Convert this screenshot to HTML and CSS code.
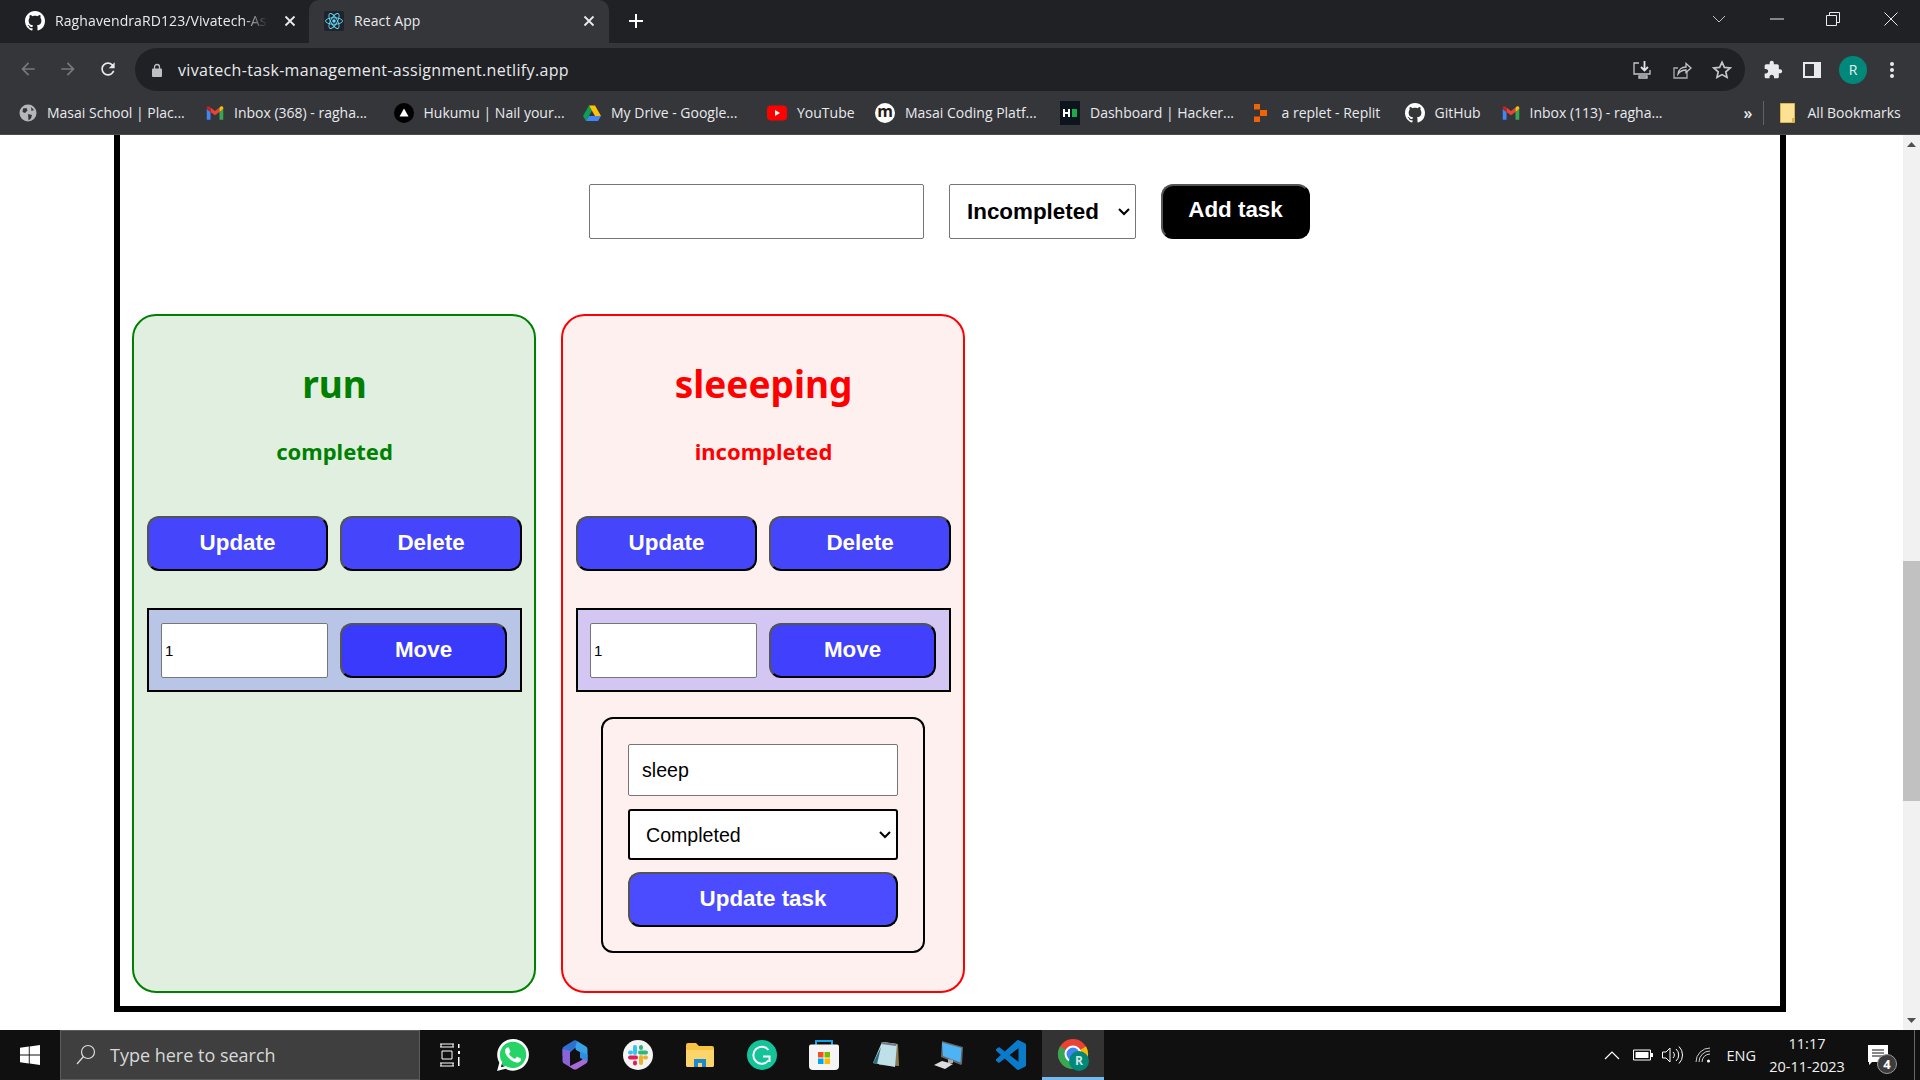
FILE: index.html
```html
<!DOCTYPE html>
<html lang="en">
<head>
<meta charset="utf-8">
<title>React App</title>
<link rel="stylesheet" href="styles.css">
</head>
<body>
<svg class="defs" width="0" height="0">
  <symbol id="gh" viewBox="0 0 16 16"><path fill="#fff" d="M8 0C3.58 0 0 3.58 0 8c0 3.54 2.29 6.53 5.47 7.59.4.07.55-.17.55-.38 0-.19-.01-.82-.01-1.49-2.01.37-2.53-.49-2.69-.94-.09-.23-.48-.94-.82-1.13-.28-.15-.68-.52-.01-.53.63-.01 1.08.58 1.23.82.72 1.21 1.87.87 2.33.66.07-.52.28-.87.51-1.07-1.78-.2-3.64-.89-3.64-3.95 0-.87.31-1.59.82-2.15-.08-.2-.36-1.02.08-2.12 0 0 .67-.21 2.2.82.64-.18 1.32-.27 2-.27.68 0 1.36.09 2 .27 1.53-1.04 2.2-.82 2.2-.82.44 1.1.16 1.92.08 2.12.51.56.82 1.27.82 2.15 0 3.07-1.87 3.75-3.65 3.95.29.25.54.73.54 1.48 0 1.07-.01 1.93-.01 2.2 0 .21.15.46.55.38A8.013 8.013 0 0016 8c0-4.42-3.58-8-8-8z"/></symbol>
  <symbol id="gm" viewBox="0 0 24 24"><path fill="#4285f4" d="M1 21h5V10.5L1 6.5z"/><path fill="#34a853" d="M18 21h5V6.5l-5 4z"/><path fill="#ea4335" d="M6 10.5V4.5l6 4.7 6-4.7v6l-6 4.6z"/><path fill="#fbbc04" d="M18 4.5l1.6-1.2c1.4-1 3.4 0 3.4 1.8v1.4l-5 4z"/><path fill="#c5221f" d="M6 4.5L4.400 3.300C3 2.300 1 3.300 1 5.100v1.400l5 4z"/></symbol>
  <symbol id="cl" viewBox="0 0 16 16"><path stroke="#e8eaed" stroke-width="1.800" fill="none" d="M3.500 3.500l9 9M12.500 3.500l-9 9"/></symbol>
</svg>

<div class="tabstrip">
  <div class="tab tab-idle">
    <svg class="ic16 ic-gh" width="20" height="20"><use href="#gh"/></svg>
    <span class="tab-title tab-fade">RaghavendraRD123/Vivatech-As</span>
    <svg class="tab-x" width="16" height="16"><use href="#cl"/></svg>
  </div>
  <div class="tab tab-active">
    <svg class="react" width="20" height="20" viewBox="0 0 20 20"><rect width="20" height="20" rx="2" fill="#20232a"/><g fill="none" stroke="#61dafb" stroke-width=".9"><ellipse cx="10" cy="10" rx="8.500" ry="3.300"/><ellipse cx="10" cy="10" rx="8.500" ry="3.300" transform="rotate(60 10 10)"/><ellipse cx="10" cy="10" rx="8.500" ry="3.300" transform="rotate(120 10 10)"/></g><circle cx="10" cy="10" r="1.700" fill="#61dafb"/></svg>
    <span class="tab-title">React App</span>
    <svg class="tab-x" width="16" height="16"><use href="#cl"/></svg>
  </div>
  <svg class="newtab" width="16" height="16" viewBox="0 0 16 16"><path d="M8 1v14M1 8h14" stroke="#fff" stroke-width="2"/></svg>
  <div class="winctl">
    <svg class="wc wc-drop" width="14" height="8" viewBox="0 0 14 8"><path d="M1 1l6 6 6-6" fill="none" stroke="#bdc1c6"/></svg>
    <svg class="wc wc-min" width="14" height="2" viewBox="0 0 14 2"><path d="M0 1h14" stroke="#e8eaed"/></svg>
    <svg class="wc wc-max" width="14" height="14" viewBox="0 0 14 14"><path d="M.5 3.500h10v10H.5zM3.500 3.500V.5h10v10h-3" fill="none" stroke="#e8eaed"/></svg>
    <svg class="wc wc-close" width="14" height="14" viewBox="0 0 14 14"><path d="M.5.5l13 13M13.500.5l-13 13" stroke="#e8eaed"/></svg>
  </div>
</div>

<div class="toolbar">
  <svg class="nav" width="20" height="20" viewBox="0 0 24 24"><path d="M20 11H7.830l5.590-5.590L12 4l-8 8 8 8 1.410-1.410L7.830 13H20z" fill="#77797d"/></svg>
  <svg class="nav" width="20" height="20" viewBox="0 0 24 24"><path d="M4 11h12.170l-5.590-5.590L12 4l8 8-8 8-1.410-1.410L16.170 13H4z" fill="#77797d"/></svg>
  <svg class="nav" width="20" height="20" viewBox="0 0 24 24"><path d="M17.650 6.350C16.200 4.900 14.210 4 12 4c-4.420 0-7.990 3.580-7.990 8s3.570 8 7.990 8c3.730 0 6.840-2.550 7.730-6h-2.080c-.82 2.330-3.040 4-5.650 4-3.310 0-6-2.690-6-6s2.690-6 6-6c1.660 0 3.140.69 4.220 1.780L13 11h7V4l-2.350 2.350z" fill="#e8eaed"/></svg>
  <div class="omnibox">
    <svg class="lock" width="10" height="14" viewBox="0 0 10 14"><path d="M2.500 6V4a2.500 2.500 0 015 0v2" fill="none" stroke="#bdc1c6" stroke-width="1.300"/><rect y="5.500" width="10" height="8.500" rx="1" fill="#bdc1c6"/></svg>
    <span class="url">vivatech-task-management-assignment.netlify.app</span>
    <div class="omni-icons">
      <svg width="20" height="20" viewBox="0 0 20 20"><path d="M7 3H2v11h16v-4M7 16h8v2H7z" fill="none" stroke="#c4c7c9" stroke-width="1.300"/><path d="M12.500 1v9M9 7l3.500 3.500L16 7" fill="none" stroke="#e3e5e7" stroke-width="1.800"/></svg>
      <svg width="20" height="20" viewBox="0 0 20 20"><path d="M15 12v6H2V8h4" fill="none" stroke="#a9acaf" stroke-width="1.300"/><path d="M6 14c.5-4.500 4-7 8-7V3.500L19 8l-5 4.500V10c-3.500 0-6 1.200-8 4z" fill="none" stroke="#c4c7c9" stroke-width="1.300"/></svg>
      <svg width="20" height="20" viewBox="0 0 20 20"><path d="M10 2.200l2.400 5.200 5.700.6-4.300 3.800 1.200 5.600L10 14.600l-5 2.800 1.200-5.600L1.900 8l5.700-.6z" fill="none" stroke="#c4c7c9" stroke-width="1.700"/></svg>
    </div>
  </div>
  <div class="tools">
    <svg width="20" height="20" viewBox="0 0 24 24"><path fill="#e8eaed" d="M20.500 11H19V7c0-1.100-.9-2-2-2h-4V3.500C13 2.120 11.880 1 10.500 1S8 2.120 8 3.500V5H4c-1.100 0-1.990.9-1.990 2v3.800H3.500c1.490 0 2.700 1.210 2.700 2.700s-1.210 2.700-2.700 2.700H2V20c0 1.100.9 2 2 2h3.800v-1.500c0-1.490 1.210-2.700 2.700-2.700 1.490 0 2.700 1.210 2.700 2.700V22H17c1.100 0 2-.9 2-2v-4h1.500c1.380 0 2.500-1.120 2.500-2.500S21.880 11 20.500 11z"/></svg>
    <svg width="18" height="18" viewBox="0 0 18 18"><path fill="#e8eaed" d="M0 1h18v16H0zM2 3v12h9V3z"/></svg>
    <span class="avatar">R</span>
    <svg width="6" height="18" viewBox="0 0 6 18"><g fill="#e8eaed"><circle cx="3" cy="3" r="2"/><circle cx="3" cy="9" r="2"/><circle cx="3" cy="15" r="2"/></g></svg>
  </div>
</div>

<div class="bookmarks">
  <div class="bm"><svg width="18" height="18" viewBox="0 0 18 18"><circle cx="9" cy="9" r="8.500" fill="#b4b7ba"/><path d="M4 4.500l3.500-.5 1 2.500L6 9 3.500 8zM9 10l4 1-1 3.500-2.500 2zM12 3l3 3-2.500 1z" fill="#35363a"/></svg><span>Masai School | Plac...</span></div>
  <div class="bm"><svg width="18" height="18"><use href="#gm"/></svg><span>Inbox (368) - ragha...</span></div>
  <div class="bm"><svg width="20" height="20" viewBox="0 0 20 20"><circle cx="10" cy="10" r="10" fill="#000"/><path d="M10 5.500l4.500 8h-9z" fill="#fff"/></svg><span>Hukumu | Nail your...</span></div>
  <div class="bm"><svg width="18" height="18" viewBox="0 0 18 18"><path fill="#0f9d58" d="M6 1.500L0 12l3 5 6-10.500z"/><path fill="#ffc107" d="M6 1.500h6L18 12h-6z"/><path fill="#4285f4" d="M3 17h12l3-5H6z"/></svg><span>My Drive - Google...</span></div>
  <div class="bm"><svg width="20" height="16" viewBox="0 0 20 16"><rect width="20" height="15" y=".5" rx="4" fill="#f00"/><path d="M8 5l5 3-5 3z" fill="#fff"/></svg><span>YouTube</span></div>
  <div class="bm"><span class="m-ic">m</span><span>Masai Coding Platf...</span></div>
  <div class="bm"><svg width="20" height="24" viewBox="0 0 20 24"><rect width="20" height="24" fill="#0e141e"/><rect x="12" y="8" width="5" height="8" fill="#1ba94c"/><path d="M4 8v8M9 8v8M4 12h5" stroke="#fff" stroke-width="2"/></svg><span>Dashboard | Hacker...</span></div>
  <div class="bm bm-replit"><svg width="14" height="18" viewBox="0 0 14 18"><path fill="#f26207" d="M0 0h6v5.500H0zM6 6h7v6H6zM0 12.500h6V18H0z"/></svg><span>a replet - Replit</span></div>
  <div class="bm"><svg width="20" height="20"><use href="#gh"/></svg><span>GitHub</span></div>
  <div class="bm"><svg width="18" height="18"><use href="#gm"/></svg><span>Inbox (113) - ragha...</span></div>
  <span class="more">»</span>
  <span class="bm-sep"></span>
  <div class="bm bm-all"><svg width="16" height="20" viewBox="0 0 16 20"><path d="M.5.5h14v19H.5z" fill="#fde293" stroke="#d9b64c"/><path d="M12 15h3v4h-3z" fill="#d9b64c"/></svg><span>All Bookmarks</span></div>
</div>

<div class="viewport">
  <main class="page">
    <div class="frame">
      <form class="addform">
        <input class="add-input" type="text">
        <select class="add-select"><option>Incompleted</option><option>Completed</option></select>
        <button class="add-btn" type="button">Add task</button>
      </form>
      <div class="cards">
        <section class="card card-done">
          <h2 class="title">run</h2>
          <p class="status">completed</p>
          <div class="actions">
            <button class="btn btn-a" type="button">Update</button>
            <button class="btn btn-a" type="button">Delete</button>
          </div>
          <div class="moverow moverow-done">
            <input class="move-input" type="number" value="1">
            <button class="btn btn-m1" type="button">Move</button>
          </div>
        </section>
        <section class="card card-todo">
          <h2 class="title">sleeeping</h2>
          <p class="status">incompleted</p>
          <div class="actions">
            <button class="btn btn-a" type="button">Update</button>
            <button class="btn btn-a" type="button">Delete</button>
          </div>
          <div class="moverow moverow-todo">
            <input class="move-input" type="number" value="1">
            <button class="btn btn-m2" type="button">Move</button>
          </div>
          <div class="editbox">
            <input class="edit-input" type="text" value="sleep">
            <select class="edit-select"><option>Completed</option><option>Incompleted</option></select>
            <button class="btn btn-u" type="button">Update task</button>
          </div>
        </section>
      </div>
    </div>
  </main>
  <div class="scrollbar">
    <svg width="9" height="5" viewBox="0 0 9 5"><path d="M4.500 0L9 5H0z" fill="#505050"/></svg>
    <div class="sb-track"><div class="sb-thumb"></div></div>
    <svg width="9" height="5" viewBox="0 0 9 5"><path d="M0 0h9L4.500 5z" fill="#505050"/></svg>
  </div>
</div>

<footer class="taskbar">
  <div class="start"><svg width="20" height="20" viewBox="0 0 20 20"><path fill="#fff" d="M0 2.800l8.800-1.200v7.900H0zM9.700 1.500L20 0v9.500H9.700zM0 10.400h8.800v8L0 17.200zM9.700 10.400H20V20L9.700 18.600z"/></svg></div>
  <div class="search">
    <svg width="20" height="22" viewBox="0 0 20 22"><circle cx="12" cy="8" r="6.500" fill="none" stroke="#ddd" stroke-width="1.200"/><path d="M7.500 12.500L1 20" stroke="#ddd" stroke-width="1.200"/></svg>
    <span>Type here to search</span>
  </div>
  <div class="apps">
    <div class="app"><svg class="taskview" width="20" height="24" viewBox="0 0 20 24"><path d="M0 1h14M0 4h14M2 8h10v8H2zM0 20h14M0 23h14" fill="none" stroke="#fff" stroke-width="1"/><path d="M1 1v3M13 1v3M1 20v3M13 20v3" stroke="#fff"/><rect x="18" y="1" width="1.500" height="4" fill="#fff"/><rect x="18" y="8" width="2" height="3" fill="#fff"/><rect x="18" y="14" width="1.500" height="9" fill="#fff"/></svg></div>
    <div class="app"><svg width="32" height="32" viewBox="0 0 24 24"><circle cx="12" cy="12" r="11" fill="#25d366"/><path fill="#fff" d="M17.472 14.382c-.297-.149-1.758-.867-2.030-.967-.273-.099-.471-.148-.67.15-.197.297-.767.966-.94 1.164-.173.199-.347.223-.644.075-.297-.15-1.255-.463-2.390-1.475-.883-.788-1.480-1.761-1.653-2.059-.173-.297-.018-.458.13-.606.134-.133.298-.347.446-.52.149-.174.198-.298.298-.497.099-.198.05-.371-.025-.52-.075-.149-.669-1.612-.916-2.207-.242-.579-.487-.5-.669-.51-.173-.008-.371-.01-.57-.01-.198 0-.52.074-.792.372-.272.297-1.040 1.016-1.040 2.479 0 1.462 1.065 2.875 1.213 3.074.149.198 2.096 3.200 5.077 4.487.709.306 1.262.489 1.694.625.712.227 1.360.195 1.871.118.571-.085 1.758-.719 2.006-1.413.248-.694.248-1.289.173-1.413-.074-.124-.272-.198-.57-.347m-5.421 7.403h-.004a9.870 9.870 0 01-5.031-1.378l-.361-.214-3.741.982.998-3.648-.235-.374a9.860 9.860 0 01-1.510-5.260c.001-5.450 4.436-9.884 9.888-9.884 2.640 0 5.122 1.030 6.988 2.898a9.825 9.825 0 012.893 6.994c-.003 5.450-4.437 9.884-9.885 9.884m8.413-18.297A11.815 11.815 0 0012.050 0C5.495 0 .16 5.335.157 11.892c0 2.096.547 4.142 1.588 5.945L.057 24l6.305-1.654a11.882 11.882 0 005.683 1.448h.005c6.554 0 11.890-5.335 11.893-11.893a11.821 11.821 0 00-3.480-8.413z"/></svg></div>
    <div class="app"><svg width="28" height="30" viewBox="0 0 28 30"><path d="M12 1a4 4 0 014 0l9 5.500a3 3 0 011.500 2.500V16L15 10z" fill="#3aa0e8"/><path d="M16 1a4 4 0 00-4 0L3 6.500A3 3 0 001.500 9v7L9 12.500 14 8z" fill="#2f6fd0"/><path d="M1.500 9v12a3 3 0 001.500 2.500l6 3.500V11z" fill="#8a63d6"/><path d="M26.500 15v6a3 3 0 01-1.500 2.500L16 29a4 4 0 01-4 0l-4-2.500 12-6z" fill="#a56ad8"/><path d="M19 11.500l7.500 3.500v6L19 18z" fill="#2e8fe0"/><circle cx="14" cy="15" r="4.500" fill="#101010"/></svg></div>
    <div class="app"><svg width="30" height="30" viewBox="0 0 30 30"><circle cx="15" cy="15" r="15" fill="#f4f4f4"/><g stroke-width="4" stroke-linecap="round"><path d="M12 7v6" stroke="#36c5f0"/><path d="M7 17.500h6" stroke="#e01e5a"/><path d="M18 17v6" stroke="#ecb22e"/><path d="M17 12.500h6" stroke="#2eb67d"/><path d="M7 12.500h1" stroke="#36c5f0"/><path d="M12 22.500v1" stroke="#e01e5a"/><path d="M22 17.500h1" stroke="#ecb22e"/><path d="M18 7v1" stroke="#2eb67d"/></g></svg></div>
    <div class="app"><svg width="28" height="24" viewBox="0 0 28 24"><path d="M0 2a2 2 0 012-2h8l3 3h13a2 2 0 012 2v17a2 2 0 01-2 2H2a2 2 0 01-2-2z" fill="#f5c242"/><path d="M0 7h28v15a2 2 0 01-2 2H2a2 2 0 01-2-2z" fill="#fcd56a"/><path d="M8 24v-8h12v8h-4v-4h-4v4z" fill="#1a8ad4"/></svg></div>
    <div class="app"><svg width="30" height="30" viewBox="0 0 30 30"><circle cx="15" cy="15" r="15" fill="#15c39a"/><path d="M21.500 10a8.500 8.500 0 100 10.500" fill="none" stroke="#fff" stroke-width="2"/><path d="M16 16.500h6.500V22" fill="none" stroke="#fff" stroke-width="2"/></svg></div>
    <div class="app"><svg width="30" height="30" viewBox="0 0 30 30"><path d="M7 6V1h16v5" fill="none" stroke="#0fa3e8" stroke-width="2"/><path d="M0 6.500A2 2 0 012 4.500h26a2 2 0 012 2V26a4 4 0 01-4 4H4a4 4 0 01-4-4z" fill="#f5f5f5"/><path fill="#f25022" d="M9 12h5.500v5.500H9z"/><path fill="#7fba00" d="M15.500 12H21v5.500h-5.500z"/><path fill="#00a4ef" d="M9 18.500h5.500V24H9z"/><path fill="#ffb900" d="M15.500 18.500H21V24h-5.500z"/></svg></div>
    <div class="app"><svg width="28" height="28" viewBox="0 0 28 28"><path d="M12 1l14 2 1 22-20-1z" fill="#8a7a4e"/><path d="M10 1l15 2-2 23L1 22z" fill="#bfe0e8"/><path d="M10 1l15 2-1 2-15-2z" fill="#778"/><path d="M9 6L1 22l4 1z" fill="#2d6f80"/></svg></div>
    <div class="app"><svg width="30" height="28" viewBox="0 0 30 28"><path d="M8 0l21 6-1 17-1 1L7 16z" fill="#666"/><path d="M8 1.500l19.500 5.500-1 14.500L9 15z" fill="#4eb3f5"/><path d="M14 18l5 1v3h-5z" fill="#aaa"/><path d="M0 24l8-4 11 3-8 5z" fill="#ddd"/></svg></div>
    <div class="app"><svg width="30" height="30" viewBox="0 0 24 24"><path fill="#0a7bcb" d="M23.150 2.587L18.210.21a1.494 1.494 0 00-1.705.29l-9.460 8.630-4.120-3.128a.999.999 0 00-1.276.057L.327 7.261A1 1 0 00.326 8.740L3.899 12 .326 15.260a1 1 0 00.001 1.479L1.650 17.940a.999.999 0 001.276.057l4.120-3.128 9.460 8.630a1.492 1.492 0 001.704.29l4.942-2.377A1.500 1.500 0 0024 20.060V3.939a1.500 1.500 0 00-.85-1.352zm-5.146 14.861L10.826 12l7.178-5.448v10.896z"/></svg></div>
    <div class="app app-active">
      <svg width="32" height="32" viewBox="0 0 32 32"><circle cx="16" cy="16" r="15" fill="#ea4335"/><path d="M16 16L29 8.500A15 15 0 0116 31z" fill="#fbbc04"/><path d="M16 16L16 31A15 15 0 013 8.500z" fill="#34a853"/><circle cx="16" cy="16" r="7.500" fill="#4285f4" stroke="#fff" stroke-width="2"/></svg>
      <span class="chrome-badge">R</span>
    </div>
  </div>
  <div class="tray">
    <svg class="t-chev" width="16" height="9" viewBox="0 0 16 9"><path d="M1 8l7-7 7 7" fill="none" stroke="#fff" stroke-width="1.200"/></svg>
    <svg class="t-bat" width="20" height="12" viewBox="0 0 20 12"><path d="M.5 1h17v10H.5z" fill="none" stroke="#fff"/><path d="M2.500 3h13v6h-13z" fill="#fff"/><path d="M18 4h2v4h-2z" fill="#fff"/></svg>
    <svg class="t-vol" width="21" height="18" viewBox="0 0 21 18"><path d="M.5 6h3.500l4-4v14l-4-4H.5z" fill="none" stroke="#fff"/><path d="M11 6a4 4 0 010 6M14 3a8 8 0 010 12M17 .5a12 12 0 010 17" fill="none" stroke="#fff"/></svg>
    <svg class="t-wifi" width="16" height="16" viewBox="0 0 16 16"><g fill="none" stroke="#ccc"><path d="M1 15A14 14 0 0115 1"/><path d="M4 15A11 11 0 0115 4"/><path d="M7 15a8 8 0 018-8"/></g><circle cx="13.500" cy="14" r="1.500" fill="#fff"/></svg>
    <span class="t-eng">ENG</span>
    <div class="t-clock"><span>11:17</span><span>20-11-2023</span></div>
    <div class="t-note">
      <svg width="20" height="20" viewBox="0 0 20 20"><path d="M0 0h20v17H4l-3 3v-3H0z" fill="#fff"/><path d="M4 5h12M4 8h12M4 11h12" stroke="#101010"/></svg>
      <span class="note-badge">4</span>
    </div>
    <span class="t-desk"></span>
  </div>
</footer>
</body>
</html>
```
FILE: styles.css
```css
* { box-sizing: border-box; }
html, body { margin: 0; height: 100%; overflow: hidden; }
body { display: flex; flex-direction: column; width: 1920px; height: 1080px; font-family: "Liberation Sans", Arial, sans-serif; background: #fff; }
.defs { position: absolute; }
svg { display: block; flex: none; }

/* tab strip */
.tabstrip { height: 43px; background: #202124; display: flex; align-items: center; color: #e8eaed; font-family: "Open Sans", sans-serif; font-size: 14px; flex: none; }
.tab { height: 43px; display: flex; align-items: center; width: 300px; padding-bottom: 2px; }
.tab-idle { width: 309px; padding-left: 25px; }
.ic-gh { margin-right: 10px; }
.tab-title { white-space: nowrap; overflow: hidden; letter-spacing: 0.1px; }
.tab-fade { width: 213px; -webkit-mask-image: linear-gradient(90deg, #000 88%, transparent); mask-image: linear-gradient(90deg, #000 88%, transparent); }
.tab-x { margin-left: auto; }
.tab-idle .tab-x { margin-right: 11px; }
.tab-active { background: #35363a; border-radius: 10px 10px 0 0; padding-left: 15px; }
.tab-active .tab-x { margin-right: 12px; }
.react { margin-right: 10px; }
.newtab { margin: -2px 0 0 19px; }
.winctl { margin-left: auto; display: flex; align-items: center; height: 100%; }
.wc { margin-top: -6px; }
.wc-drop { margin-right: 44px; }
.wc-min { margin-right: 42px; }
.wc-max { margin-right: 44px; }
.wc-close { margin-right: 22px; }

/* toolbar */
.toolbar { height: 48px; background: #35363a; display: flex; align-items: flex-start; padding: 5px 0 0 8px; flex: none; }
.nav { padding: 0 10px; margin-top: 11px; box-sizing: content-box; width: 20px; }
.omnibox { margin-left: 7px; width: 1610px; height: 43px; border-radius: 22px; background: #202124; display: flex; align-items: center; padding: 0 13px 0 17px; color: #e8eaed; }
.lock { margin-right: 16px; }
.url { font-family: "Open Sans", sans-serif; font-size: 16px; letter-spacing: 0.33px; white-space: nowrap; }
.omni-icons { margin-left: auto; display: flex; gap: 20px; }
.tools { display: flex; align-items: center; height: 43px; }
.tools svg:nth-child(1) { margin-left: 18px; }
.tools svg:nth-child(2) { margin-left: 20px; }
.avatar { width: 28px; height: 28px; border-radius: 50%; background: #00897b; color: #e8f5f3; font: 14px "Open Sans", sans-serif; display: flex; align-items: center; justify-content: center; margin-left: 18px; }
.tools svg:nth-child(4) { margin-left: 22px; }

/* bookmarks */
.bookmarks { height: 44px; background: #35363a; border-bottom: 1px solid #4a4b4f; display: grid; grid-template-columns: 187px 187.500px 189.500px 184px 108px 185px 193.500px 151px 97px 242px 19px 17px auto; align-items: center; padding: 0 0 0 19px; color: #e8eaed; font-family: "Open Sans", sans-serif; font-size: 14px; flex: none; }
.bm { display: flex; align-items: center; gap: 10px; white-space: nowrap; min-width: 0; }
.bm-replit { gap: 14px; }
.m-ic { width: 20px; height: 20px; border-radius: 50%; background: #fff; color: #2a1a14; font-weight: 700; font-size: 16px; line-height: 17px; text-align: center; flex: none; }
.more { font-size: 16px; font-weight: 600; }
.bm-sep { width: 1px; height: 24px; background: #5f6368; }
.bm-all { gap: 12px; }

/* page */
.viewport { flex: 1; min-height: 0; display: flex; background: #fff; }
.page { flex: 1; min-width: 0; padding: 0 117px 0 114px; overflow: hidden; }
.frame { width: 1672px; height: 877px; border: 6px solid #000; border-top: 0; padding: 49px 0 0; }
.addform { display: flex; justify-content: center; gap: 25px; height: 55px; margin-left: -1px; }
.add-input { width: 335px; height: 55px; border: 1px solid #767676; border-radius: 2px; background: #fff; padding: 0 10px; }
.add-select, .edit-select { appearance: none; -webkit-appearance: none; background-color: #fff; background-image: url("data:image/svg+xml,%3Csvg xmlns='http://www.w3.org/2000/svg' width='12' height='8' viewBox='0 0 12 8'%3E%3Cpath d='M1 1l5 5 5-5' fill='none' stroke='%23000' stroke-width='2'/%3E%3C/svg%3E"); background-repeat: no-repeat; background-position: right 5px center; color: #000; }
.add-select { width: 187px; height: 55px; font: 700 22.400px "Liberation Sans", Arial, sans-serif; border: 1px solid #767676; border-radius: 2px; padding: 0 0 0 17px; }
.add-btn { width: 149px; height: 55px; font: 700 22.400px "Liberation Sans", Arial, sans-serif; color: #fff; background: #000; border: 2px outset #000; border-radius: 12px; padding: 0 0 3px; }
.cards { display: flex; gap: 25px; margin: 75px 0 0 12px; }
.card { width: 404px; height: 679px; border-radius: 24px; border: 2px solid; padding: 0 12px 0 13px; display: flex; flex-direction: column; align-items: stretch; }
.card-done { border-color: #008000; background: #e0efe0; color: #008000; }
.card-todo { border-color: #f00; background: #fff0f0; color: #f00; }
.title { margin: 41px 0 0; font: 700 37px/54px "Noto Sans", sans-serif; text-align: center; }
.status { margin: 24px 0 0; font: 700 22px/32px "Noto Sans", sans-serif; text-align: center; }
.actions { display: grid; grid-template-columns: 181px 182px; gap: 12px; margin-top: 49px; }
.btn { height: 55px; font: 700 22.400px "Liberation Sans", Arial, sans-serif; color: #fff; border: 2px outset #000; border-radius: 12px; padding: 0 0 2px; }
.btn-a { background: #4545fb; }
.btn-m1 { background: #3a3afc; }
.btn-m2 { background: #4040fd; }
.moverow { display: grid; grid-template-columns: 1fr 1fr; gap: 12px; margin-top: 37px; border: 2px solid #000; padding: 13px 13px 12px 12px; }
.moverow-done { background: #b8c5e6; }
.moverow-todo { background: #d3c6f2; }
.move-input { min-width: 0; height: 55px; border: 1px solid #767676; border-radius: 2px; background: #fff; padding: 0 3px; font: 15px "Liberation Sans", Arial, sans-serif; }
.editbox { align-self: center; margin: 25px 1px 0 0; width: 324px; height: 236px; border: 2px solid #000; border-radius: 12px; padding: 25px 25px 0; display: flex; flex-direction: column; }
.edit-input { height: 52px; border: 1px solid #767676; border-radius: 2px; padding: 0 13px; font: 19.600px "Liberation Sans", Arial, sans-serif; color: #000; background: #fff; }
.edit-select { height: 51px; margin-top: 13px; border: 2px solid #000; border-radius: 3px; padding: 0 0 0 16px; font: 19.600px "Liberation Sans", Arial, sans-serif; }
.btn-u { background: #4b4bff; width: 100%; margin-top: 12px; }

/* scrollbar */
.scrollbar { width: 17px; background: #f1f1f1; display: flex; flex-direction: column; align-items: center; padding: 7px 0; flex: none; }
.sb-track { flex: 1; width: 100%; padding-top: 414px; }
.sb-thumb { height: 240px; background: #c1c1c1; }

/* taskbar */
.taskbar { height: 50px; background: #101010; display: flex; flex: none; color: #fff; font-family: "Open Sans", sans-serif; }
.start { width: 60px; display: flex; align-items: center; justify-content: center; }
.search { width: 360px; background: #3f3f3f; border: 1px solid #5c5c5c; display: flex; align-items: center; gap: 14px; padding: 0 0 0 15px; color: #d8d8d8; font-size: 18px; }
.apps { display: flex; }
.app { width: 62.200px; display: flex; align-items: center; justify-content: center; position: relative; }
.taskview { margin-left: -3px; }
.app-active { background: #333; border-bottom: 3px solid #76b9ed; }
.chrome-badge { position: absolute; left: 27px; top: 21px; width: 20px; height: 20px; border-radius: 50%; background: #00897b; color: #cfe8e4; font: 700 12px/20px "Open Sans", sans-serif; text-align: center; }
.tray { margin-left: auto; display: flex; align-items: center; position: relative; font-size: 14.500px; color: #f0f0f0; }
.t-chev { margin-right: 13px; }
.t-bat { margin-right: 9px; }
.t-vol { margin-right: 12px; }
.t-wifi { margin-right: 15px; }
.t-eng { margin-right: 13px; }
.t-clock { width: 76px; display: flex; flex-direction: column; align-items: center; line-height: 23px; white-space: nowrap; margin-right: 23px; }
.t-note { position: relative; margin-right: 32px; }
.note-badge { position: absolute; left: 9px; top: 9px; width: 20px; height: 20px; border-radius: 50%; background: #3c3c3c; border: 1px solid #999; color: #fff; font: 700 13px/18px "Open Sans", sans-serif; text-align: center; }
.t-desk { position: absolute; right: 5px; top: 0; width: 1px; height: 50px; background: #666; }
```
